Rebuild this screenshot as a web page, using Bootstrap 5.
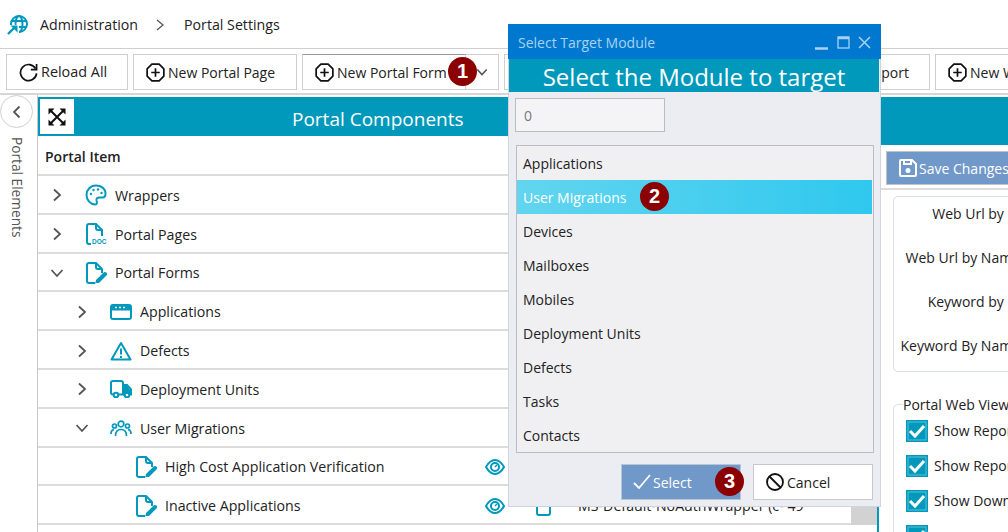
<!DOCTYPE html>
<html lang="en">
<head>
  <meta charset="UTF-8">
  <meta name="viewport" content="width=device-width, initial-scale=1.0">
  <title>Portal Settings</title>
  <link href="https://cdn.jsdelivr.net/npm/bootstrap@5.3.3/dist/css/bootstrap.min.css" rel="stylesheet">
  <script src="https://cdn.jsdelivr.net/npm/bootstrap@5.3.3/dist/js/bootstrap.bundle.min.js" defer></script>
  <style>
    html, body { height: 532px; overflow: hidden; }
    body {
      position: relative;
      width: 1008px;
      font-family: "Open Sans", "Noto Sans", sans-serif;
      font-size: 14px;
      color: #222;
      background: #fff;
    }
    svg { flex-shrink: 0; display: block; }
    .top-bar { height: 48px; padding: 2px 0 0 7px; font-size: 14.2px; }
    .top-bar .logo-ic { margin-right: 12px; }
    .top-bar .crumb-sep { margin: 0 20px 0 18px; }
    .tool-bar {
      height: 47px;
      padding: 5px 0 0 6px;
      gap: 5px;
      border-top: 1px solid #cfcfcf;
      border-bottom: 2px solid #d6d6d6;
      overflow: hidden;
    }
    .tb-btn {
      height: 36px;
      flex-shrink: 0;
      padding: 0 0 0 12px;
      gap: 3px;
      background: #fff;
      border: 1px solid #cfcfcf;
      border-radius: 0;
      font-size: 14px;
      color: #222;
      white-space: nowrap;
    }
    .w-reload { width: 122px; font-size: 14.4px; }
    .w-page { width: 164px; }
    .w-form { width: 164px; border-top-color: #999; }
    .w-caret { width: 33px; margin-left: -5px; border-left: 0; padding: 0; justify-content: center; }
    .w-hidden { width: 301px; }
    .w-import { width: 120px; justify-content: flex-end; padding: 0 20px 0 0; }
    .w-new { width: 200px; }
    .main-area { height: 437px; }
    .side-rail { width: 38px; border-right: 1px solid #c9c9c9; flex-shrink: 0; }
    .rail-toggle {
      width: 33px; height: 33px;
      border: 1px solid #cfcfcf;
      border-radius: 50%;
      background: #fff;
    }
    .rail-label {
      writing-mode: vertical-rl;
      margin: 9px 0 0 6px;
      color: #555;
      font-size: 13.7px;
      white-space: nowrap;
    }
    .center-col { width: 839px; flex-shrink: 0; overflow: hidden; }
    .band { background: #0099bc; color: #fff; }
    .center-band { height: 39px; margin-top: 2px; padding-left: 2px; }
    .expand-btn { width: 34px; height: 35px; background: #fff; margin-right: 218px; }
    .band-title { font-size: 19px; padding-top: 5px; }
    .tree-wrap { width: 813px; }
    .tree-head { height: 40px; padding: 3px 0 0 7px; font-weight: 600; font-size: 14px; border-bottom: 2px solid #dcdcdc; }
    .tree-row { height: 38.8px; padding-top: 2px; border-bottom: 2px solid #dcdcdc; font-size: 14.2px; white-space: nowrap; }
    .tree-name { width: 447px; flex-shrink: 0; }
    .lvl-1 { padding-left: 12px; }
    .lvl-2 { padding-left: 37px; }
    .lvl-3 { padding-left: 62px; }
    .chev { width: 14px; margin-right: 21px; }
    .tree-icon { width: 22px; margin-right: 8px; }
    .eye-cell { width: 51px; }
    .doc-cell { width: 42px; }
    .scroll-track { width: 26px; background: #d2d2d2; flex-shrink: 0; }
    .right-col { width: 131px; flex-shrink: 0; border-left: 2px solid #0099bc; overflow: hidden; }
    .right-band { height: 48px; margin-top: 2px; }
    .save-strip { height: 45px; padding: 6px 0 0 7px; border-bottom: 2px solid #dcdcdc; }
    .save-btn {
      width: 140px; height: 34px;
      padding: 0 0 0 12px; gap: 2px;
      border: 1px solid #c2c2c2;
      border-radius: 0;
      background: #7098c9;
      color: #fff;
      font-size: 14px;
      white-space: nowrap;
    }
    .url-box {
      width: 300px;
      height: 176px;
      margin: 6px 0 0 14px;
      border: 1px solid #d5dfe9;
      border-radius: 5px;
    }
    .url-label { width: 126px; height: 44px; text-align: right; white-space: nowrap; font-size: 14px; padding-top: 6px; }
    .view-box {
      width: 300px;
      height: 160px;
      margin: 32px 0 0 14px;
      padding: 8px 0 0 12px;
      border: 1px solid #d5dfe9;
      border-radius: 5px;
      position: relative;
    }
    .view-legend {
      position: absolute; top: -10px; left: 9px;
      background: #fff; font-size: 14px; white-space: nowrap; line-height: 20px;
    }
    .view-check { height: 35px; gap: 6px; white-space: nowrap; font-size: 14px; }
    .check-mark { width: 22px; height: 22px; background: #0099bc; flex-shrink: 0; }

    .module-dialog {
      position: absolute; left: 508px; top: 24px;
      width: 373px; height: 483px;
      background: #ecedf2;
      border: 1px solid #d3d3e0;
      border-top: 0;
    }
    .dlg-title { height: 35px; margin: 0 -1px; padding: 2px 10px 0; background: #0078d0; color: #a9d2f0; font-size: 14px; }
    .dlg-head { height: 33px; margin-right: 1px; font-size: 24px; line-height: 35px; text-align: center; }
    .dlg-input {
      width: 150px; height: 34px;
      margin: 6px 0 13px 6px;
      border: 1px solid #bcbcbc; border-radius: 0;
      background: #f4f4f7; color: #777; font-size: 14px;
      padding: 0 8px;
    }
    .module-list { width: 358px; height: 308px; margin-left: 7px; border: 1px solid #bcbcc4; border-radius: 0; background: #f0f0f2; padding-right: 1px; }
    .module-list .list-group-item {
      height: 34px;
      margin-top: 0;
      padding: 0 0 0 6px;
      border: 0;
      border-radius: 0;
      background: transparent;
      color: #222;
      font-size: 14px;
      display: flex;
      align-items: center;
    }
    .module-list .list-group-item.active {
      margin-top: 0;
      border: 0;
      background: linear-gradient(90deg, #62d5ef, #2fc8ee);
      color: #fff;
    }
    .dlg-foot { padding: 11px 7px 0 0; gap: 12px; justify-content: flex-end; }
    .dlg-btn { width: 120px; height: 36px; padding: 0 0 0 12px; gap: 3px; border-radius: 0; font-size: 14px; position: relative; }
    .dlg-select { background: #7098c9; border: 1px solid #b9c6d8; color: #fff; padding-left: 11px; gap: 2px; }
    .dlg-cancel { background: #fff; border: 1px solid #c8c8c8; color: #222; }
    .step-badge {
      position: absolute;
      width: 29px; height: 29px;
      border-radius: 50%;
      background: #8b0000;
      color: #fff;
      font-family: "Liberation Sans", Arial, sans-serif;
      font-weight: 700;
      font-size: 20px;
      line-height: 29px;
      text-align: center;
      z-index: 3;
    }
    .step-one { left: 448px; top: 57px; }
    .step-two { left: 123px; top: 2px; }
    .step-three { left: 93px; top: 2px; }
  </style>
</head>
<body>
  <svg width="0" height="0" class="position-absolute">
    <symbol id="i-doc" viewBox="0 0 22 22">
      <path d="M10 21H4a2 2 0 0 1-2-2V3a2 2 0 0 1 2-2h7l6 6v4" fill="none" stroke="#0099bc" stroke-width="2" stroke-linejoin="round"/>
      <path d="M11 1v4a2 2 0 0 0 2 2h4" fill="none" stroke="#0099bc" stroke-width="2"/>
    </symbol>
    <symbol id="i-form" viewBox="0 0 22 22">
      <use href="#i-doc"/>
      <path d="M20 12l-7 7" stroke="#0099bc" stroke-width="4" stroke-linecap="round"/>
      <path d="M11.500 17.500l-1.500 4 4-1.500z" fill="#0099bc"/>
    </symbol>
    <symbol id="i-plus" viewBox="0 0 20 20">
      <path d="M6.200 1.200h7.600l5 5v7.600l-5 5H6.200l-5-5V6.200z" fill="none" stroke="#111" stroke-width="1.800" stroke-linejoin="round"/>
      <path d="M10 5.500v9M5.500 10h9" stroke="#111" stroke-width="1.800"/>
    </symbol>
    <symbol id="i-eye" viewBox="0 0 20 16">
      <path d="M1 8c2.500-4.500 5.500-7 9-7s6.500 2.500 9 7c-2.500 4.500-5.500 7-9 7s-6.500-2.500-9-7z" fill="none" stroke="#0099bc" stroke-width="2"/>
      <circle cx="10" cy="8" r="4" fill="none" stroke="#0099bc" stroke-width="2"/>
      <path d="M10 8l2-2" stroke="#0099bc" stroke-width="1.500"/>
    </symbol>
    <symbol id="i-right" viewBox="0 0 14 14">
      <path d="M4 1.500l6 5.500-6 5.500" fill="none" stroke="#555" stroke-width="1.800"/>
    </symbol>
    <symbol id="i-down" viewBox="0 0 14 14">
      <path d="M1.500 4l5.500 6 5.500-6" fill="none" stroke="#555" stroke-width="1.800"/>
    </symbol>
  </svg>

  <header class="top-bar d-flex align-items-center">
    <svg class="logo-ic" width="21" height="20" viewBox="0 0 21 20" fill="none" stroke="#0099bc">
      <circle cx="12" cy="9" r="8" stroke-width="2"/>
      <ellipse cx="12" cy="9" rx="3.500" ry="8" stroke-width="2"/>
      <path d="M4 6h16M4 12h16" stroke-width="2"/>
      <path d="M0 20l9-9" stroke="#fff" stroke-width="6"/>
      <path d="M2 11h9v9z" fill="#fff" stroke="#fff" stroke-width="2"/>
      <path d="M1 19l6-6" stroke-width="2.400"/>
      <path d="M3.500 10.500h7v7z" fill="#0099bc" stroke="none"/>
    </svg>
    <span>Administration</span>
    <svg class="crumb-sep" width="8" height="12" viewBox="0 0 8 12"><path d="M1 1l6 5-6 5" fill="none" stroke="#555" stroke-width="1.300"/></svg>
    <span>Portal Settings</span>
  </header>

  <div class="tool-bar d-flex">
    <button class="btn tb-btn w-reload d-flex align-items-center">
      <svg width="19" height="19" viewBox="0 0 20 20"><path d="M17.500 6A8.500 8.500 0 1 0 18.500 11" fill="none" stroke="#111" stroke-width="1.800"/><path d="M18.500 1v6h-6" fill="none" stroke="#111" stroke-width="1.800"/></svg>
      Reload All
    </button>
    <button class="btn tb-btn w-page d-flex align-items-center"><svg width="19" height="19"><use href="#i-plus"/></svg>New Portal Page</button>
    <button class="btn tb-btn w-form d-flex align-items-center"><svg width="19" height="19"><use href="#i-plus"/></svg>New Portal Form</button>
    <button class="btn tb-btn w-caret d-flex align-items-center" aria-label="More"><svg width="12" height="12"><use href="#i-down"/></svg></button>
    <div class="tb-btn w-hidden"></div>
    <button class="btn tb-btn w-import d-flex align-items-center">Import</button>
    <button class="btn tb-btn w-new d-flex align-items-center"><svg width="19" height="19"><use href="#i-plus"/></svg>New Wrapper</button>
  </div>
  <span class="step-badge step-one">1</span>

  <div class="main-area d-flex">
    <aside class="side-rail">
      <div class="rail-toggle d-flex align-items-center justify-content-center">
        <svg width="9" height="14" viewBox="0 0 9 14"><path d="M7.500 1.500L2 7l5.500 5.500" fill="none" stroke="#555" stroke-width="1.800"/></svg>
      </div>
      <div class="rail-label">Portal Elements</div>
    </aside>

    <section class="center-col">
      <div class="band center-band d-flex align-items-center">
        <div class="expand-btn d-flex align-items-center justify-content-center">
          <svg width="18" height="18" viewBox="0 0 18 18">
            <path d="M3 3l12 12M15 3L3 15" stroke="#111" stroke-width="2"/>
            <path d="M0.500 0.500h6l-6 6zM17.500 0.500h-6l6 6zM0.500 17.500h6l-6-6zM17.500 17.500h-6l6-6z" fill="#111"/>
          </svg>
        </div>
        <div class="band-title">Portal Components</div>
      </div>
      <div class="d-flex">
        <div class="tree-wrap">
          <div class="tree-head d-flex align-items-center">Portal Item</div>

          <div class="tree-row d-flex align-items-center">
            <div class="tree-name lvl-1 d-flex align-items-center">
              <svg class="chev" height="14"><use href="#i-right"/></svg>
              <svg class="tree-icon" height="22" viewBox="0 0 22 22" fill="none" stroke="#0099bc" stroke-width="2">
                <path d="M11 1.500C5.500 1.500 1.500 5.800 1.500 11s4 9.500 8.500 9.500c2.500 0 2-2.500 1.500-4-.5-2 1-3 3-3h3c2 0 3-1.500 3-4C20.500 4.500 16 1.500 11 1.500z"/>
                <circle cx="6" cy="10" r="1.200" fill="#0099bc" stroke="none"/><circle cx="8.500" cy="6" r="1.200" fill="#0099bc" stroke="none"/><circle cx="13" cy="5.500" r="1.200" fill="#0099bc" stroke="none"/><circle cx="16.500" cy="9" r="1.200" fill="#0099bc" stroke="none"/>
              </svg>
              Wrappers
            </div>
          </div>

          <div class="tree-row d-flex align-items-center">
            <div class="tree-name lvl-1 d-flex align-items-center">
              <svg class="chev" height="14"><use href="#i-right"/></svg>
              <svg class="tree-icon" height="22" viewBox="0 0 22 22">
                <path d="M6 21H4a2 2 0 0 1-2-2V3a2 2 0 0 1 2-2h7l6 6v6" fill="none" stroke="#0099bc" stroke-width="2"/>
                <path d="M11 1v4a2 2 0 0 0 2 2h4" fill="none" stroke="#0099bc" stroke-width="2"/>
                <text x="7" y="21" font-family="Liberation Sans, sans-serif" font-weight="700" font-size="6.500" fill="#0099bc">DOC</text>
              </svg>
              Portal Pages
            </div>
          </div>

          <div class="tree-row d-flex align-items-center">
            <div class="tree-name lvl-1 d-flex align-items-center">
              <svg class="chev" height="14"><use href="#i-down"/></svg>
              <svg class="tree-icon" height="22"><use href="#i-form"/></svg>
              Portal Forms
            </div>
          </div>

          <div class="tree-row d-flex align-items-center">
            <div class="tree-name lvl-2 d-flex align-items-center">
              <svg class="chev" height="14"><use href="#i-right"/></svg>
              <svg class="tree-icon" height="16" viewBox="0 0 22 16">
                <rect x="1" y="1" width="20" height="14" rx="2" fill="none" stroke="#0099bc" stroke-width="2"/>
                <path d="M1 2h20v4.500H1z" fill="#0099bc"/>
                <path d="M5 3.500h2M9 3.500h2M13 3.500h2" stroke="#fff" stroke-width="1.500"/>
              </svg>
              Applications
            </div>
          </div>

          <div class="tree-row d-flex align-items-center">
            <div class="tree-name lvl-2 d-flex align-items-center">
              <svg class="chev" height="14"><use href="#i-right"/></svg>
              <svg class="tree-icon" height="20" viewBox="0 0 22 20" fill="none" stroke="#0099bc" stroke-width="2">
                <path d="M11 2L1.500 18.500h19z" stroke-linejoin="round"/>
                <path d="M11 7.500v6M11 15v2"/>
              </svg>
              Defects
            </div>
          </div>

          <div class="tree-row d-flex align-items-center">
            <div class="tree-name lvl-2 d-flex align-items-center">
              <svg class="chev" height="14"><use href="#i-right"/></svg>
              <svg class="tree-icon" height="18" viewBox="0 0 22 18" fill="none" stroke="#0099bc" stroke-width="2">
                <path d="M3.500 14.500H3a2 2 0 0 1-2-2V3a2 2 0 0 1 2-2h8a2 2 0 0 1 2 2v11.500H8"/>
                <path d="M13 5h4l4 4.500v5h-2"/><path d="M13 14.500h2"/>
                <path d="M14 6h3l3 4v4h-6z" fill="#0099bc" stroke="none"/>
                <circle cx="6" cy="15" r="2.300"/><circle cx="17" cy="15" r="2.300"/>
              </svg>
              Deployment Units
            </div>
          </div>

          <div class="tree-row d-flex align-items-center">
            <div class="tree-name lvl-2 d-flex align-items-center">
              <svg class="chev" height="14"><use href="#i-down"/></svg>
              <svg class="tree-icon" height="17" viewBox="0 0 22 17" fill="none" stroke="#0099bc" stroke-width="1.700">
                <circle cx="11" cy="4" r="2.800"/><circle cx="4.500" cy="6" r="2"/><circle cx="17.500" cy="6" r="2"/>
                <path d="M5.500 16c0-4 2-6.500 5.500-6.500s5.500 2.500 5.500 6.500M1 14c0-2.500 1-4 3-4.300M21 14c0-2.500-1-4-3-4.300"/>
              </svg>
              User Migrations
            </div>
          </div>

          <div class="tree-row d-flex align-items-center">
            <div class="tree-name lvl-3 d-flex align-items-center">
              <svg class="chev" height="14"></svg>
              <svg class="tree-icon" height="22"><use href="#i-form"/></svg>
              High Cost Application Verification
            </div>
            <div class="eye-cell"><svg width="20" height="16"><use href="#i-eye"/></svg></div>
          </div>

          <div class="tree-row d-flex align-items-center">
            <div class="tree-name lvl-3 d-flex align-items-center">
              <svg class="chev" height="14"></svg>
              <svg class="tree-icon" height="22"><use href="#i-form"/></svg>
              Inactive Applications
            </div>
            <div class="eye-cell"><svg width="20" height="16"><use href="#i-eye"/></svg></div>
            <div class="doc-cell"><svg width="15" height="20" viewBox="0 0 15 20"><rect x="1" y="1" width="13" height="18" rx="2" fill="none" stroke="#0099bc" stroke-width="2"/></svg></div>
            <div>MS-Default-NoAuthWrapper (c- 49</div>
          </div>
        </div>
        <div class="scroll-track"></div>
      </div>
    </section>

    <aside class="right-col">
      <div class="band right-band"></div>
      <div class="save-strip">
        <button class="btn save-btn d-flex align-items-center">
          <svg width="18" height="18" viewBox="0 0 18 18" fill="none" stroke="#fff" stroke-width="2"><path d="M2 1h11l4 4v11a1 1 0 0 1-1 1H2a1 1 0 0 1-1-1V2a1 1 0 0 1 1-1z"/><path d="M5 1v4h7V1"/><circle cx="9" cy="11.500" r="1.500" fill="#fff"/></svg>
          Save Changes
        </button>
      </div>
      <div class="url-box">
        <div class="url-label">Web Url by Id</div>
        <div class="url-label">Web Url by Name</div>
        <div class="url-label">Keyword by Id</div>
        <div class="url-label">Keyword By Name</div>
      </div>
      <div class="view-box">
        <div class="view-legend">Portal Web View</div>
        <div class="view-check d-flex align-items-center">
          <div class="check-mark"><svg width="22" height="22" viewBox="0 0 22 22"><rect x="2" y="2" width="18" height="18" fill="none" stroke="#5cc0d8"/><path d="M4 11l5 5 9-10" fill="none" stroke="#fff" stroke-width="3"/></svg></div>
          Show Reports
        </div>
        <div class="view-check d-flex align-items-center">
          <div class="check-mark"><svg width="22" height="22" viewBox="0 0 22 22"><rect x="2" y="2" width="18" height="18" fill="none" stroke="#5cc0d8"/><path d="M4 11l5 5 9-10" fill="none" stroke="#fff" stroke-width="3"/></svg></div>
          Show Report Filters
        </div>
        <div class="view-check d-flex align-items-center">
          <div class="check-mark"><svg width="22" height="22" viewBox="0 0 22 22"><rect x="2" y="2" width="18" height="18" fill="none" stroke="#5cc0d8"/><path d="M4 11l5 5 9-10" fill="none" stroke="#fff" stroke-width="3"/></svg></div>
          Show Downloads
        </div>
        <div class="view-check d-flex align-items-center">
          <div class="check-mark"><svg width="22" height="22" viewBox="0 0 22 22"><rect x="2" y="2" width="18" height="18" fill="none" stroke="#5cc0d8"/><path d="M4 11l5 5 9-10" fill="none" stroke="#fff" stroke-width="3"/></svg></div>
        </div>
      </div>
    </aside>
  </div>

  <div class="module-dialog d-flex flex-column">
    <div class="dlg-title d-flex align-items-center justify-content-between">
      <span>Select Target Module</span>
      <svg width="56" height="16" viewBox="0 0 56 16" fill="none" stroke="#a9d2f0">
        <path d="M0 13.500h13" stroke-width="2.500"/>
        <rect x="23" y="2" width="11" height="11" stroke-width="1.300"/><path d="M23 3h11" stroke-width="2.500"/>
        <path d="M44 2l11 11M55 2L44 13" stroke-width="1.500"/>
      </svg>
    </div>
    <div class="band dlg-head">Select the Module to target</div>
    <input class="form-control dlg-input" type="text" value="0" readonly>
    <div class="list-group module-list">
      <div class="list-group-item">Applications</div>
      <div class="list-group-item active position-relative">User Migrations<span class="step-badge step-two">2</span></div>
      <div class="list-group-item">Devices</div>
      <div class="list-group-item">Mailboxes</div>
      <div class="list-group-item">Mobiles</div>
      <div class="list-group-item">Deployment Units</div>
      <div class="list-group-item">Defects</div>
      <div class="list-group-item">Tasks</div>
      <div class="list-group-item">Contacts</div>
    </div>
    <div class="dlg-foot d-flex">
      <button class="btn dlg-btn dlg-select d-flex align-items-center">
        <svg width="18" height="16" viewBox="0 0 18 16"><path d="M1 9l5 5L17 1" fill="none" stroke="#fff" stroke-width="1.800"/></svg>
        Select<span class="step-badge step-three">3</span>
      </button>
      <button class="btn dlg-btn dlg-cancel d-flex align-items-center">
        <svg width="18" height="18" viewBox="0 0 18 18" fill="none" stroke="#111" stroke-width="1.800"><circle cx="9" cy="9" r="8"/><path d="M3.500 3.500l11 11"/></svg>
        Cancel
      </button>
    </div>
  </div>
</body>
</html>
